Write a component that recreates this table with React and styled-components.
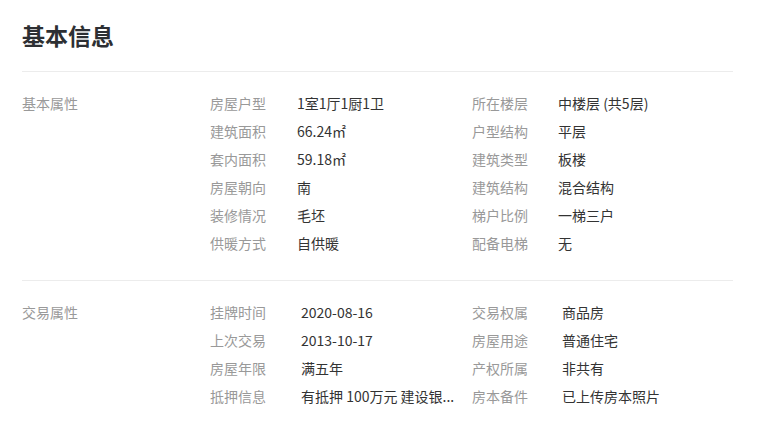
import React from "react";
import styled, { createGlobalStyle } from "styled-components";

const GlobalStyle = createGlobalStyle`
  body {
    margin: 0;
    background: #fff;
    font-family: "Noto Sans CJK SC", "Liberation Sans", sans-serif;
  }
`;

const basic = [
  ["房屋户型", "1室1厅1厨1卫", "所在楼层", "中楼层 (共5层)"],
  ["建筑面积", "66.24㎡", "户型结构", "平层"],
  ["套内面积", "59.18㎡", "建筑类型", "板楼"],
  ["房屋朝向", "南", "建筑结构", "混合结构"],
  ["装修情况", "毛坯", "梯户比例", "一梯三户"],
  ["供暖方式", "自供暖", "配备电梯", "无"],
];

const trade = [
  ["挂牌时间", "2020-08-16", "交易权属", "商品房"],
  ["上次交易", "2013-10-17", "房屋用途", "普通住宅"],
  ["房屋年限", "满五年", "产权所属", "非共有"],
  ["抵押信息", "有抵押 100万元 建设银...", "房本备件", "已上传房本照片"],
];

function Section({ name, rows, cols }) {
  return (
    <Block>
      <SectionName>{name}</SectionName>
      <Grid $cols={cols}>
        {rows.map((r, i) => (
          <React.Fragment key={i}>
            <Label>{r[0]}</Label>
            <Value>{r[1]}</Value>
            <Label>{r[2]}</Label>
            <Value>{r[3]}</Value>
          </React.Fragment>
        ))}
      </Grid>
    </Block>
  );
}

export default function App() {
  return (
    <Page>
      <GlobalStyle />
      <Title>基本信息</Title>
      <Section name="基本属性" rows={basic} cols="87px 175px 86px 1fr" />
      <Section name="交易属性" rows={trade} cols="91px 171px 90px 1fr" />
    </Page>
  );
}

const Page = styled.div`
  width: 711px;
  padding: 0 22px;
`;

const Title = styled.h2`
  margin: 20px 0 0;
  padding-bottom: 21px;
  font-size: 23px;
  line-height: 30px;
  font-weight: bold;
  color: #2d2f33;
  border-bottom: 1px solid #ececec;
`;

const Block = styled.div`
  display: flex;
  padding: 17px 0 23px;
  border-bottom: 1px solid #ececec;
  &:last-child {
    border-bottom: none;
  }
`;

const SectionName = styled.div`
  width: 188px;
  flex-shrink: 0;
  font-size: 14px;
  line-height: 28px;
  color: #999;
`;

const Grid = styled.div`
  flex: 1;
  display: grid;
  grid-template-columns: ${(p) => p.$cols};
  grid-auto-rows: 28px;
  font-size: 14px;
  line-height: 28px;
`;

const Label = styled.div`
  color: #999;
  white-space: nowrap;
`;

const Value = styled.div`
  color: #333;
  white-space: nowrap;
  overflow: hidden;
  text-overflow: ellipsis;
`;
